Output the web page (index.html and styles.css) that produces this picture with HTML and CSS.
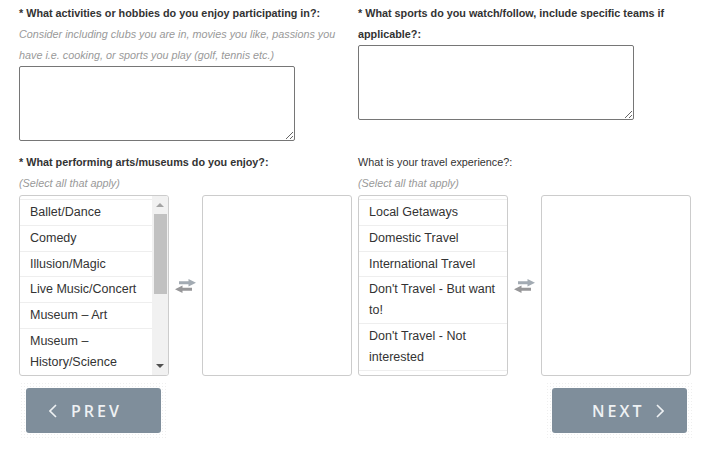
FILE: index.html
```html
<!DOCTYPE html>
<html lang="en">
<head>
<meta charset="utf-8">
<title>Interests</title>
<link rel="stylesheet" href="styles.css">
</head>
<body>
<div class="form">
  <div class="grid">
    <div class="field">
      <label class="q">* What activities or hobbies do you enjoy participating in?:</label>
      <p class="hint">Consider including clubs you are in, movies you like, passions you have i.e. cooking, or sports you play (golf, tennis etc.)</p>
      <textarea class="ta ta-left"></textarea>
    </div>
    <div class="field">
      <label class="q">* What sports do you watch/follow, include specific teams if applicable?:</label>
      <textarea class="ta ta-right"></textarea>
    </div>
    <div class="field">
      <label class="q">* What performing arts/museums do you enjoy?:</label>
      <p class="hint">(Select all that apply)</p>
      <div class="dual">
        <div class="list">
          <ul class="items">
            <li>Ballet/Dance</li>
            <li>Comedy</li>
            <li>Illusion/Magic</li>
            <li>Live Music/Concert</li>
            <li>Museum – Art</li>
            <li>Museum – History/Science</li>
          </ul>
          <div class="scrollbar">
            <span class="arrow up"></span>
            <span class="thumb"></span>
            <span class="arrow down"></span>
          </div>
        </div>
        <div class="swap">
          <svg width="21" height="14" viewBox="0 0 21 14"><polygon points="4,2.3 13.5,2.3 13.5,0 21,3.8 13.5,7.6 13.5,5.3 4,5.3" fill="#a3abb3"/><polygon points="17,8.7 7.5,8.7 7.5,6.4 0,10.2 7.5,14 7.5,11.7 17,11.7" fill="#979799"/></svg>
        </div>
        <div class="box"></div>
      </div>
    </div>
    <div class="field">
      <label class="q plain">What is your travel experience?:</label>
      <p class="hint">(Select all that apply)</p>
      <div class="dual">
        <div class="list">
          <ul class="items">
            <li>Local Getaways</li>
            <li>Domestic Travel</li>
            <li>International Travel</li>
            <li>Don't Travel - But want to!</li>
            <li>Don't Travel - Not interested</li>
          </ul>
        </div>
        <div class="swap">
          <svg width="21" height="14" viewBox="0 0 21 14"><polygon points="4,2.3 13.5,2.3 13.5,0 21,3.8 13.5,7.6 13.5,5.3 4,5.3" fill="#a3abb3"/><polygon points="17,8.7 7.5,8.7 7.5,6.4 0,10.2 7.5,14 7.5,11.7 17,11.7" fill="#979799"/></svg>
        </div>
        <div class="box"></div>
      </div>
    </div>
  </div>
  <div class="nav">
    <div class="btn-wrap">
      <button class="btn btn-prev" type="button">
        <svg class="chev" width="8" height="14" viewBox="0 0 8 14"><polyline points="7,1 1,7 7,13" fill="none" stroke="#eef1f3" stroke-width="1.6"/></svg>
        <span>PREV</span>
      </button>
    </div>
    <div class="btn-wrap">
      <button class="btn btn-next" type="button">
        <span>NEXT</span>
        <svg class="chev" width="8" height="14" viewBox="0 0 8 14"><polyline points="1,1 7,7 1,13" fill="none" stroke="#eef1f3" stroke-width="1.6"/></svg>
      </button>
    </div>
  </div>
</div>
</body>
</html>
```
FILE: styles.css
```css
html, body {
  margin: 0;
  padding: 0;
  background: #ffffff;
}

body {
  font-family: "Liberation Sans", Arial, sans-serif;
  color: #333333;
}

.grid {
  display: grid;
  grid-template-columns: 330px 330px;
  column-gap: 9px;
  row-gap: 11px;
  padding: 3px 0 0 19px;
}

.field {
  display: flex;
  flex-direction: column;
  align-items: flex-start;
}

.q {
  display: block;
  font-size: 10.8px;
  font-weight: bold;
  line-height: 21px;
  color: #333333;
}

.q.plain {
  font-weight: normal;
}

.hint {
  margin: 0;
  font-size: 10.8px;
  font-style: italic;
  line-height: 21px;
  color: #999999;
}

.ta {
  display: block;
  box-sizing: border-box;
  height: 75px;
  margin: 0;
  padding: 2px;
  border: 1px solid #767676;
  border-radius: 2px;
  background: #ffffff;
  font-family: "Liberation Sans", Arial, sans-serif;
  font-size: 13px;
}

.ta-left {
  width: 276px;
}

.ta-right {
  width: 276px;
}

.dual {
  display: flex;
  height: 181px;
  margin-top: 1px;
}

.list {
  box-sizing: border-box;
  width: 150px;
  height: 181px;
  border: 1px solid #cccccc;
  border-radius: 3px;
  display: flex;
  overflow: hidden;
}

.items {
  list-style: none;
  margin: 0;
  padding: 3px 0 0 0;
  flex: 1;
  font-size: 12.5px;
  color: #333333;
}

.items li {
  padding: 2px 6px 2px 10px;
  line-height: 20.8px;
  border-bottom: 1px solid #eeeeee;
}

.items li:first-child {
  border-top: 1px solid #eeeeee;
}

.scrollbar {
  width: 16px;
  background: #f1f1f1;
  display: flex;
  flex-direction: column;
  align-items: center;
}

.arrow {
  display: block;
  width: 0;
  height: 0;
  border-left: 4px solid transparent;
  border-right: 4px solid transparent;
}

.arrow.up {
  margin-top: 7px;
  margin-bottom: 7px;
  border-bottom: 4px solid #a3a3a3;
}

.arrow.down {
  margin-top: auto;
  margin-bottom: 7px;
  border-top: 4px solid #505050;
}

.thumb {
  display: block;
  width: 13px;
  height: 80px;
  background: #c1c1c1;
}

.swap {
  width: 33px;
  display: flex;
  align-items: center;
  justify-content: center;
}

.box {
  box-sizing: border-box;
  width: 150px;
  height: 181px;
  border: 1px solid #cccccc;
  border-radius: 3px;
}

.nav {
  display: flex;
  justify-content: space-between;
  padding: 0 14px 0 20px;
  margin-top: 6px;
}

.btn-wrap {
  padding: 6px 7px 6px 6px;
  background-color: #ffffff;
  background-image: radial-gradient(circle, #efefef 0.5px, transparent 0.6px);
  background-size: 3px 3px;
}

.btn {
  display: flex;
  align-items: center;
  box-sizing: border-box;
  width: 135px;
  height: 45px;
  margin: 0;
  border: none;
  border-radius: 3px;
  background: #7f8e9b;
  color: #eef1f3;
  font-family: "Open Sans", "Liberation Sans", sans-serif;
  font-size: 16px;
  font-weight: 600;
  letter-spacing: 3px;
  cursor: pointer;
}

.btn-prev {
  padding: 0 0 0 23px;
  gap: 14px;
}

.btn-next {
  padding: 0 0 0 40px;
  gap: 12px;
}

.chev {
  display: block;
  flex: none;
}
```
